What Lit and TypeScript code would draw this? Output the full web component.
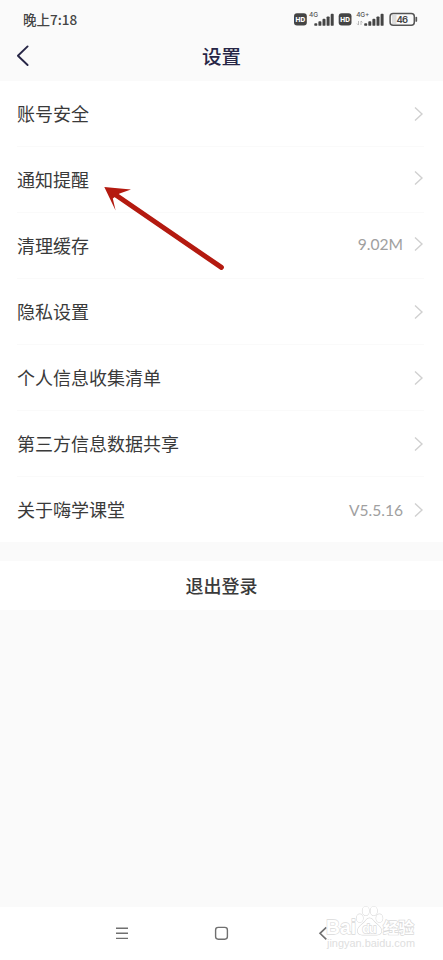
import { LitElement, html, svg, css } from "lit";
import { customElement, property } from "lit/decorators.js";

interface Row {
  label: string;
  value?: string;
  raised?: boolean;
}

const ROWS: Row[] = [
  { label: "账号安全" },
  { label: "通知提醒", raised: true },
  { label: "清理缓存", value: "9.02M", raised: true },
  { label: "隐私设置" },
  { label: "个人信息收集清单" },
  { label: "第三方信息数据共享" },
  { label: "关于嗨学课堂", value: "V5.5.16" },
];

@customElement("status-bar")
class StatusBar extends LitElement {
  static styles = css`
    :host {
      display: flex;
      justify-content: space-between;
      height: 38px;
      padding-left: 23px;
      color: #444;
    }
    .time {
      font-size: 13.5px;
      font-weight: 500;
      line-height: 39px;
    }
    svg {
      display: block;
      font-family: Inter, "Liberation Sans", sans-serif;
    }
    .hd {
      font-size: 6.5px;
      font-weight: 800;
      fill: #fff;
    }
    .net {
      font-size: 6.5px;
      font-weight: 500;
      fill: #555;
    }
    .pct {
      font-size: 9.5px;
      font-weight: 600;
      fill: #444;
    }
  `;

  private bars(x: number) {
    return [2.6, 4.6, 7, 9.4, 12].map(
      (h, i) => svg`<rect x=${x + i * 4.1} y=${25.8 - h} width="3" height=${h} rx="0.9" fill="#444"/>`
    );
  }

  render() {
    return html`
      <div class="time">晚上7:18</div>
      <svg width="158" height="38" viewBox="0 0 158 38">
        <rect x="9" y="13.3" width="12.8" height="12.2" rx="3" fill="#444" />
        <text class="hd" x="15.4" y="21.8" text-anchor="middle" textLength="9.6">HD</text>
        <text class="net" x="24" y="17.3" textLength="9">4G</text>
        ${this.bars(29.3)}
        <rect x="53.7" y="13.3" width="12.8" height="12.2" rx="3" fill="#444" />
        <text class="hd" x="60.1" y="21.8" text-anchor="middle" textLength="9.6">HD</text>
        <text class="net" x="71.3" y="17.3" textLength="13">4G+</text>
        <path d="M73.5 21v4M72 23.6l1.5 1.5M76 25v-4l1.5 1.4" fill="none" stroke="#aaa" stroke-width="0.8" />
        ${this.bars(79.2)}
        <rect x="107" y="15" width="4.5" height="9" fill="#ddd" />
        <rect x="105.1" y="13.6" width="24.2" height="11.6" rx="3" fill="none" stroke="#555" stroke-width="1.5" />
        <path d="M131.3 17.6v3.4" stroke="#555" stroke-width="1.7" stroke-linecap="round" />
        <text class="pct" x="117.3" y="23" text-anchor="middle" textLength="11.5">46</text>
      </svg>
    `;
  }
}

@customElement("title-bar")
class TitleBar extends LitElement {
  static styles = css`
    :host {
      display: grid;
      grid-template-columns: 44px 1fr 44px;
      height: 43px;
      color: #272646;
    }
    svg {
      display: block;
    }
    h1 {
      margin: 0;
      font-size: 19.5px;
      font-weight: 500;
      line-height: 35px;
      text-align: center;
    }
  `;
  render() {
    return html`
      <svg width="44" height="43" viewBox="0 0 44 43">
        <path d="M27.6 8.4L17.9 17.7L27.6 27" fill="none" stroke="currentColor" stroke-width="1.9" stroke-linecap="round" stroke-linejoin="round" />
      </svg>
      <h1>设置</h1>
    `;
  }
}

@customElement("setting-row")
class SettingRow extends LitElement {
  static styles = css`
    :host {
      display: flex;
      align-items: center;
      box-sizing: border-box;
      height: 66px;
      margin: 0 19px 0 17px;
      border-bottom: 1px solid #fafafa;
    }
    .label {
      flex: 1;
      padding-bottom: 2px;
      font-size: 18px;
      line-height: 26px;
      color: #3a3a3a;
    }
    .end {
      display: flex;
      align-items: center;
    }
    :host([raised]) .end {
      padding-bottom: 3px;
    }
    .value {
      margin-right: 10px;
      font-family: Lato, "Noto Sans", sans-serif;
      font-size: 15.6px;
      color: #a0a0a0;
    }
    svg {
      display: block;
    }
  `;
  @property() label = "";
  @property() value = "";
  @property({ type: Boolean, reflect: true }) raised = false;
  render() {
    return html`
      <span class="label">${this.label}</span>
      <span class="end">
        ${this.value ? html`<span class="value">${this.value}</span>` : null}
        <svg width="11" height="16" viewBox="0 0 11 16">
          <path d="M2 1.4L9 8L2 14.6" fill="none" stroke="#d0d0d0" stroke-width="1.4" />
        </svg>
      </span>
    `;
  }
}

@customElement("nav-bar")
class NavBar extends LitElement {
  static styles = css`
    :host {
      display: block;
      height: 53px;
      background: #fff;
    }
    svg {
      display: block;
    }
    .mark {
      fill: #fff;
      stroke: #dadada;
      stroke-width: 1.3;
      paint-order: stroke;
      font-family: "Liberation Sans", sans-serif;
      font-weight: 700;
    }
    .brand {
      font-size: 20.5px;
    }
    .brand-cn {
      font-family: "Noto Sans CJK SC", sans-serif;
      font-size: 15px;
    }
    .du {
      font-size: 13px;
    }
    .url {
      font-family: "Liberation Sans", sans-serif;
      font-size: 10px;
      fill: #dedede;
    }
  `;
  render() {
    return html`
      <svg width="443" height="53" viewBox="0 0 443 53" overflow="visible">
        <g fill="none" stroke="#707070" stroke-width="1.4">
          <path d="M116 21.2h12M116 26.3h12M116 31.4h12" />
          <rect x="215.6" y="20.4" width="11.8" height="11.8" rx="2.6" />
          <path d="M326.3 20.3L320 26.3L326.3 32.3" stroke-width="1.6" />
        </g>
        <g class="mark">
          <text class="brand" x="326" y="27" textLength="30" lengthAdjust="spacingAndGlyphs">Bai</text>
          <ellipse cx="359.8" cy="11.2" rx="3.2" ry="4" />
          <ellipse cx="365.8" cy="4" rx="3.3" ry="4.4" />
          <ellipse cx="373.8" cy="4" rx="3.3" ry="4.4" />
          <ellipse cx="379.4" cy="11.2" rx="3.2" ry="4" />
          <path d="M369.5 11.2c-2 0-3.2 1.6-4.4 3.2c-2 2.6-7.4 5.2-7.4 9.2c0 3 2.2 4.2 4.8 4.2h14c2.8 0 4.9-1.2 4.9-4.2c0-4-5.4-6.6-7.4-9.2c-1.2-1.6-2.5-3.2-4.5-3.2z" />
          <text class="du" x="362.3" y="25.6" textLength="14.4">du</text>
          <text class="brand-cn" x="383" y="26" textLength="31" lengthAdjust="spacingAndGlyphs">经验</text>
        </g>
        <text class="url" x="327" y="40" textLength="88" lengthAdjust="spacingAndGlyphs">jingyan.baidu.com</text>
      </svg>
    `;
  }
}

@customElement("app-root")
class AppRoot extends LitElement {
  static styles = css`
    :host {
      position: relative;
      display: flex;
      flex-direction: column;
      height: 960px;
      overflow: hidden;
      background: #fafafa;
      font-family: "Noto Sans CJK SC", sans-serif;
    }
    .list {
      height: 461px;
      background: #fff;
      overflow: hidden;
    }
    .logout {
      margin-top: 19px;
      height: 49px;
      background: #fff;
      color: #3a3a3a;
      font-size: 18px;
      font-weight: 500;
      line-height: 48px;
      text-align: center;
    }
    nav-bar {
      margin-top: auto;
    }
    .pointer {
      position: absolute;
      left: 100px;
      top: 180px;
    }
  `;
  render() {
    return html`
      <status-bar></status-bar>
      <title-bar></title-bar>
      <div class="list">
        ${ROWS.map(
          (r) => html`<setting-row .label=${r.label} .value=${r.value ?? ""} ?raised=${r.raised ?? false}></setting-row>`
        )}
      </div>
      <div class="logout">退出登录</div>
      <nav-bar></nav-bar>
      <svg class="pointer" width="130" height="96" viewBox="0 0 130 96">
        <path d="M4.3 7L31 9.4L19.6 13.6L12.8 18.6L15.6 30.4Z" fill="#b41a10" />
        <path d="M14 13.8L121.4 87.4" stroke="#b41a10" stroke-width="5" stroke-linecap="round" />
      </svg>
    `;
  }
}
